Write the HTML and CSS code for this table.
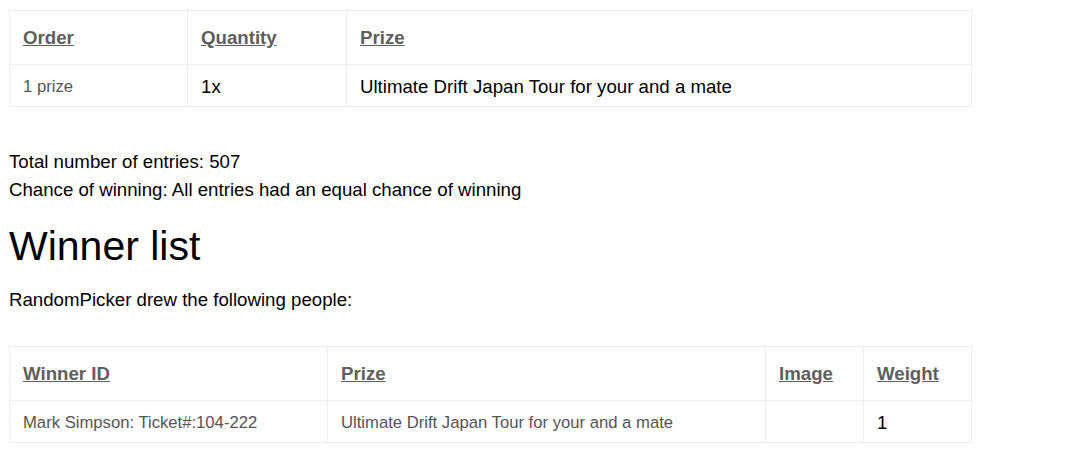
FILE: index.html
```html
<!DOCTYPE html>
<html lang="en">
<head>
<meta charset="utf-8">
<title>Winner list</title>
<link rel="stylesheet" href="styles.css">
</head>
<body>
<main class="page">
  <table class="grid prizes">
    <colgroup>
      <col class="c-order"><col class="c-qty"><col class="c-prize">
    </colgroup>
    <thead>
      <tr>
        <th><a href="#">Order</a></th>
        <th><a href="#">Quantity</a></th>
        <th><a href="#">Prize</a></th>
      </tr>
    </thead>
    <tbody>
      <tr>
        <td class="muted">1 prize</td>
        <td>1x</td>
        <td>Ultimate Drift Japan Tour for your and a mate</td>
      </tr>
    </tbody>
  </table>

  <p class="stats">Total number of entries: 507<br>Chance of winning: All entries had an equal chance of winning</p>

  <h1 class="title">Winner list</h1>

  <p class="intro">RandomPicker drew the following people:</p>

  <table class="grid winners">
    <colgroup>
      <col class="c-id"><col class="c-wprize"><col class="c-image"><col class="c-weight">
    </colgroup>
    <thead>
      <tr>
        <th><a href="#">Winner ID</a></th>
        <th><a href="#">Prize</a></th>
        <th><a href="#">Image</a></th>
        <th><a href="#">Weight</a></th>
      </tr>
    </thead>
    <tbody>
      <tr>
        <td class="muted">Mark Simpson: Ticket#:104-222</td>
        <td class="muted">Ultimate Drift Japan Tour for your and a mate</td>
        <td></td>
        <td>1</td>
      </tr>
    </tbody>
  </table>
</main>
</body>
</html>
```

FILE: styles.css
```css
html, body {
  margin: 0;
  padding: 0;
  background: #ffffff;
}

body {
  font-family: "Liberation Sans", Arial, sans-serif;
  font-size: 18.67px;
  line-height: 28px;
  color: #000000;
}

.page {
  padding: 10px 0 0 9px;
}

.grid {
  border-collapse: separate;
  border-spacing: 0;
  width: 963px;
  table-layout: fixed;
  border-top: 1px solid #ededed;
  border-left: 1px solid #ededed;
}

.grid th,
.grid td {
  border-right: 1px solid #ededed;
  border-bottom: 1px solid #ededed;
  text-align: left;
  vertical-align: middle;
  white-space: nowrap;
}

.grid th {
  padding: 13px 12px 12px 13px;
  font-weight: bold;
}

.grid th a {
  color: #5e5e5e;
  text-decoration: underline;
}

.grid td {
  padding: 8px 12px 5px 13px;
}

.grid td.muted {
  color: #555555;
  font-size: 16.67px;
}

.c-order { width: 178px; }
.c-qty { width: 159px; }
.c-prize { width: auto; }

.c-id { width: 318px; }
.c-wprize { width: 438px; }
.c-image { width: 98px; }
.c-weight { width: auto; }

.stats {
  margin: 41px 0 0 0;
}

.title {
  margin: 20px 0 0 0;
  font-size: 41px;
  line-height: 45px;
  font-weight: normal;
}

.intro {
  margin: 17px 0 0 0;
}

.winners {
  margin-top: 32px;
}
```
